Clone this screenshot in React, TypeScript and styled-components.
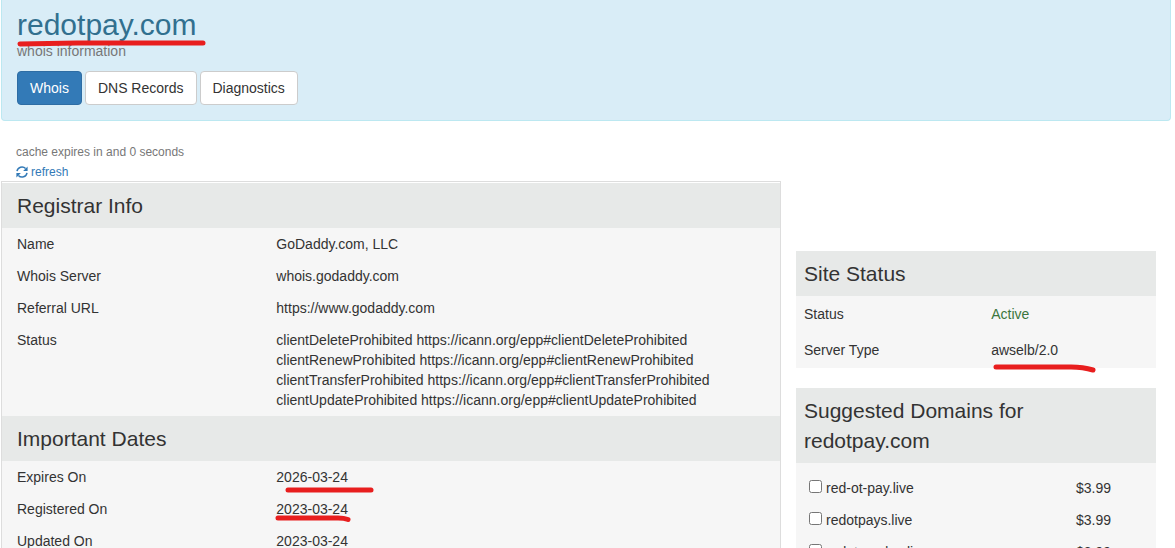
import React from "react";
import styled, { createGlobalStyle } from "styled-components";

const Global = createGlobalStyle`
  * { box-sizing: border-box; }
  body {
    margin: 0;
    background: #fff;
    color: #333;
    font: 14px/20px "Liberation Sans", Arial, sans-serif;
  }
  h1, h2, p, dl, dd { margin: 0; font-weight: 400; }
`;

const Page = styled.div`
  height: 100vh;
  overflow: hidden;
  padding: 0 4px 0 1px;
`;

const Banner = styled.header`
  padding: 8px 15px 15px;
  margin-bottom: 20px;
  background: #d9edf7;
  border: 1px solid #bce8f1;
  border-top: 0;
  border-radius: 0 0 4px 4px;
`;

const Title = styled.h1`
  font-size: 30px;
  line-height: 33px;
  color: #31708f;
`;

const Subtitle = styled.p`
  color: #777;
`;

const Tabs = styled.nav`
  display: flex;
  gap: 3px;
  margin-top: 10px;
`;

const Tab = styled.button<{ $active?: boolean }>`
  height: 34px;
  padding: 0 12px;
  font: inherit;
  border-radius: 4px;
  cursor: pointer;
  border: 1px solid ${(p) => (p.$active ? "#2e6da4" : "#ccc")};
  background: ${(p) => (p.$active ? "#337ab7" : "#fff")};
  color: ${(p) => (p.$active ? "#fff" : "#333")};
`;

const Columns = styled.div`
  display: grid;
  grid-template-columns: 2fr 1fr;
  align-items: start;
`;

const CacheNote = styled.div`
  padding: 0 15px;
  font-size: 12px;
  line-height: 22px;
  color: #777;
`;

const Refresh = styled.a`
  display: flex;
  align-items: center;
  gap: 3px;
  width: max-content;
  line-height: 18px;
  color: #337ab7;
  text-decoration: none;
`;

const Record = styled.section`
  padding-top: 1px;
  border: 1px solid #ddd;
  background: linear-gradient(#fff 1px, #f6f6f6 1px);
`;

const Heading = styled.h2<{ $inset: number }>`
  padding: 8px ${(p) => p.$inset}px 7px;
  background: #e7e9e8;
  font-size: 21px;
  line-height: 30px;
`;

const Field = styled.div`
  display: grid;
  grid-template-columns: 1fr 2fr;
  padding: 6px 0;

  dt, dd { padding: 0 15px; }
`;

const Line = styled.div``;

const Side = styled.aside`
  padding: 0 15px;
`;

const AdSlot = styled.div`
  height: 90px;
  margin-bottom: 20px;
`;

const Card = styled.section`
  margin-bottom: 20px;
  background: #f6f6f6;
`;

const StatusTable = styled.table`
  width: 100%;
  table-layout: fixed;
  border-collapse: collapse;

  th, td { padding: 8px; text-align: left; font-weight: 400; }
  th { width: 52%; }
`;

const Active = styled.span`
  color: #3c763d;
`;

const Offers = styled.div`
  padding: 15px 8px;
`;

const OfferTable = styled.table`
  width: 100%;
  table-layout: fixed;
  border-collapse: collapse;

  td { padding: 0 5px 12px; }
  td:last-child { width: 77px; }
`;

const Choice = styled.label`
  display: flex;
  gap: 4px;

  input { width: 13px; height: 13px; margin: 2px 0 0; }
`;

const Marked = styled.span`
  position: relative;
`;

const Stroke = styled.svg`
  position: absolute;
  overflow: visible;
  fill: none;
  stroke: #e81e1e;
  stroke-width: 5;
  stroke-linecap: round;
  stroke-linejoin: round;
  pointer-events: none;
`;

function Underlined({ text, path, top }: { text: string; path: string; top: number }) {
  return (
    <Marked>
      {text}
      <Stroke width="1" height="1" style={{ left: 0, top }} aria-hidden="true">
        <path d={path} />
      </Stroke>
    </Marked>
  );
}

const registrar: [string, string[]][] = [
  ["Name", ["GoDaddy.com, LLC"]],
  ["Whois Server", ["whois.godaddy.com"]],
  ["Referral URL", ["https://www.godaddy.com"]],
  ["Status", ["Delete", "Renew", "Transfer", "Update"].map(
    (s) => `client${s}Prohibited https://icann.org/epp#client${s}Prohibited`
  )],
];

const domains = ["red-ot-pay.live", "redotpays.live", "redotpaydoc.live"];

export default function App() {
  return (
    <Page>
      <Global />
      <Banner>
        <Title>
          <Underlined text="redotpay.com" top={34} path="M3 2 L60 1 L186 1" />
        </Title>
        <Subtitle>whois information</Subtitle>
        <Tabs>
          <Tab type="button" $active>Whois</Tab>
          <Tab type="button">DNS Records</Tab>
          <Tab type="button">Diagnostics</Tab>
        </Tabs>
      </Banner>
      <Columns>
        <main>
          <CacheNote>
            <p>cache expires in and 0 seconds</p>
            <Refresh href="#refresh">
              <svg width="12" height="12" viewBox="0 0 12 12" fill="none" stroke="currentColor" strokeWidth="1.5" aria-hidden="true">
                <path d="M1 5.2A5 5 0 0 1 9.6 2.6M11 6.8A5 5 0 0 1 2.4 9.4" />
                <path d="M11.6 0.4V4.9H7.1ZM0.4 11.6V7.1H4.9Z" fill="currentColor" stroke="none" />
              </svg>
              refresh
            </Refresh>
          </CacheNote>
          <Record>
            <Heading $inset={15}>Registrar Info</Heading>
            <dl>
              {registrar.map(([name, lines]) => (
                <Field key={name}>
                  <dt>{name}</dt>
                  <dd>{lines.map((l) => <Line key={l}>{l}</Line>)}</dd>
                </Field>
              ))}
            </dl>
            <Heading $inset={15}>Important Dates</Heading>
            <dl>
              <Field>
                <dt>Expires On</dt>
                <dd><Underlined text="2026-03-24" top={20} path="M12 1 H95" /></dd>
              </Field>
              <Field>
                <dt>Registered On</dt>
                <dd><Underlined text="2023-03-24" top={16} path="M2 1 H62 Q68 1 72 2.5" /></dd>
              </Field>
              <Field>
                <dt>Updated On</dt>
                <dd>2023-03-24</dd>
              </Field>
            </dl>
          </Record>
        </main>
        <Side>
          <AdSlot />
          <Card>
            <Heading $inset={8}>Site Status</Heading>
            <StatusTable>
              <tbody>
                <tr>
                  <th scope="row">Status</th>
                  <td><Active>Active</Active></td>
                </tr>
                <tr>
                  <th scope="row">Server Type</th>
                  <td><Underlined text="awselb/2.0" top={24} path="M5 1 H80 Q92 1 102 4" /></td>
                </tr>
              </tbody>
            </StatusTable>
          </Card>
          <Card>
            <Heading $inset={8}>Suggested Domains for redotpay.com</Heading>
            <Offers>
              <OfferTable>
                <tbody>
                  {domains.map((d) => (
                    <tr key={d}>
                      <td><Choice><input type="checkbox" />{d}</Choice></td>
                      <td>$3.99</td>
                    </tr>
                  ))}
                </tbody>
              </OfferTable>
            </Offers>
          </Card>
        </Side>
      </Columns>
    </Page>
  );
}
